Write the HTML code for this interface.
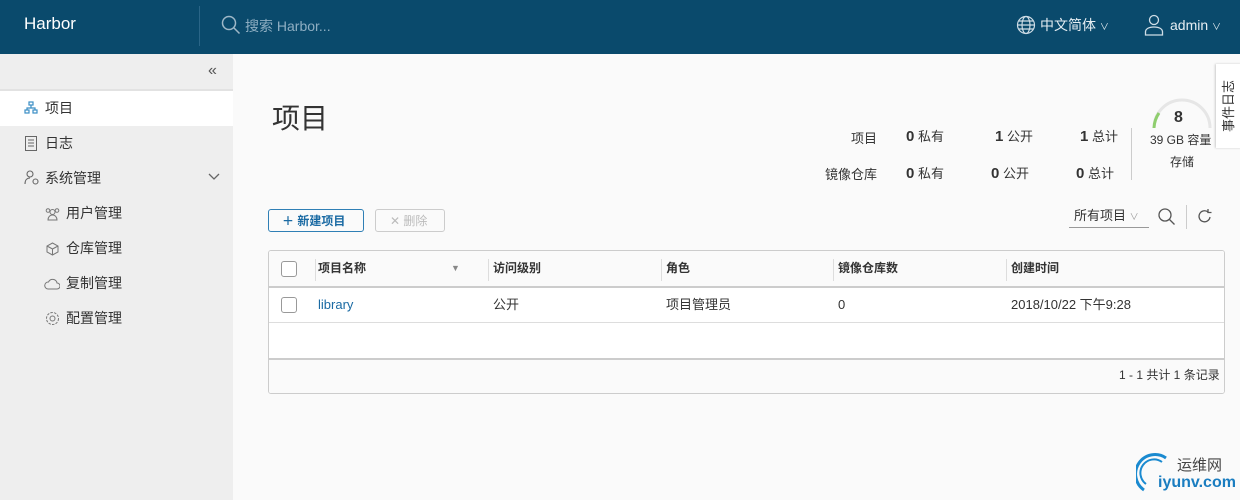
<!DOCTYPE html>
<html><head><meta charset="utf-8"><style>
*{margin:0;padding:0;box-sizing:border-box}
body{width:1240px;height:500px;overflow:hidden;font-family:"Liberation Sans","Noto Sans CJK SC",sans-serif;background:#fafafa;color:#333;position:relative;line-height:18px}
.hdr{position:absolute;left:0;top:0;width:1240px;height:54px;background:#0a4a6c;color:#fff}
.abs{position:absolute}
.side{position:absolute;left:0;top:54px;width:233px;height:446px;background:#eeeeee}
.nav{position:absolute;font-size:14px;color:#333}
.cb{position:absolute;width:16px;height:16px;border:1px solid #999;border-radius:3px;background:#fff}
.sep{position:absolute;width:1px;background:#ddd}
.t{position:absolute;font-size:13px;line-height:18px;height:18px}
</style></head><body>
<div class="hdr">
 <div class="abs" style="left:24px;top:15px;font-size:17px">Harbor</div>
 <div class="abs" style="left:199px;top:6px;width:1px;height:40px;background:#2a6587"></div>
 <svg class="abs" style="left:221px;top:15px" width="20" height="20" viewBox="0 0 20 20" fill="none" stroke="#9fb8c8" stroke-width="1.5"><circle cx="8" cy="8" r="6.5"/><path d="M13 13l5.5 5.5"/></svg>
 <div class="abs" style="left:245px;top:17px;font-size:14px;color:#8eaec2">搜索 Harbor...</div>
 <svg class="abs" style="left:1016px;top:15px" width="20" height="20" viewBox="0 0 20 20" fill="none" stroke="#cfdde6" stroke-width="1.2"><circle cx="10" cy="10" r="8.5"/><ellipse cx="10" cy="10" rx="4" ry="8.5"/><path d="M1.5 10h17M3 6h14M3 14h14"/></svg>
 <div class="abs" style="left:1040px;top:16px;font-size:14px;color:#e6eef3">中文简体 <span style="font-size:9px">∨</span></div>
 <svg class="abs" style="left:1144px;top:14px" width="20" height="22" viewBox="0 0 20 22" fill="none" stroke="#cfdde6" stroke-width="1.3"><circle cx="10" cy="6" r="4.5"/><path d="M1.5 21v-3c0-3 3-5 8.5-5s8.5 2 8.5 5v3z"/></svg>
 <div class="abs" style="left:1170px;top:16px;font-size:14px;color:#e6eef3">admin <span style="font-size:9px">∨</span></div>
</div>
<div class="side">
 <div class="abs" style="left:208px;top:8px;font-size:16px;color:#555">«</div>
 <div class="abs" style="left:0;top:35px;width:233px;height:2px;background:#e2e2e2"></div>
 <div class="abs" style="left:0;top:37px;width:233px;height:35px;background:#fff"></div>
 <svg class="abs" style="left:24px;top:47px" width="14" height="14" viewBox="0 0 14 14" fill="none" stroke="#3a8ec4" stroke-width="1.2"><rect x="5" y="1" width="4" height="3"/><rect x="1" y="9" width="4" height="3"/><rect x="9" y="9" width="4" height="3"/><path d="M7 4v3M3 9V7h8v2"/></svg>
 <div class="nav" style="left:45px;top:45px">项目</div>
 <svg class="abs" style="left:25px;top:82px" width="12" height="15" viewBox="0 0 12 15" fill="none" stroke="#666" stroke-width="1"><rect x=".5" y=".5" width="11" height="14"/><path d="M3 4h6M3 7h6M3 10h6"/></svg>
 <div class="nav" style="left:45px;top:80px">日志</div>
 <svg class="abs" style="left:24px;top:116px" width="16" height="16" viewBox="0 0 16 16" fill="none" stroke="#666" stroke-width="1.1"><circle cx="6" cy="4" r="3"/><path d="M1 14c0-4 2-6 5-6"/><circle cx="11.5" cy="11.5" r="2.5"/></svg>
 <div class="nav" style="left:45px;top:115px">系统管理</div>
 <svg class="abs" style="left:208px;top:119px" width="12" height="8" viewBox="0 0 12 8" fill="none" stroke="#666" stroke-width="1.3"><path d="M1 1l5 5 5-5"/></svg>
 <div class="nav" style="left:66px;top:150px">用户管理</div>
 <div class="nav" style="left:66px;top:185px">仓库管理</div>
 <div class="nav" style="left:66px;top:220px">复制管理</div>
 <div class="nav" style="left:66px;top:255px">配置管理</div>
 <svg class="abs" style="left:45px;top:153px" width="15" height="14" viewBox="0 0 15 14" fill="none" stroke="#777"><circle cx="7.5" cy="5" r="2.5"/><path d="M3 13c0-3 2-5 4.5-5s4.5 2 4.5 5z"/><circle cx="3" cy="3.5" r="1.8"/><circle cx="12" cy="3.5" r="1.8"/></svg>
 <svg class="abs" style="left:46px;top:188px" width="13" height="14" viewBox="0 0 13 14" fill="none" stroke="#777"><path d="M6.5 1l5.5 3v6l-5.5 3-5.5-3V4zM1 4l5.5 3 5.5-3M6.5 7v6"/></svg>
 <svg class="abs" style="left:44px;top:224px" width="16" height="12" viewBox="0 0 16 12" fill="none" stroke="#777"><path d="M4 11h9a3 3 0 0 0 0-6 4.5 4.5 0 0 0-8.5-1A3.5 3.5 0 0 0 4 11z"/></svg>
 <svg class="abs" style="left:45px;top:257px" width="15" height="15" viewBox="0 0 15 15" fill="none" stroke="#777"><circle cx="7.5" cy="7.5" r="2.5"/><circle cx="7.5" cy="7.5" r="6" stroke-dasharray="2.5 1.2"/></svg>
</div>
<div class="abs" style="left:272px;top:103px;font-size:28px;line-height:32px;color:#333">项目</div>
<div class="t" style="left:851px;top:130px">项目</div>
<div class="t" style="left:825px;top:166px">镜像仓库</div>
<div class="t" style="left:906px;top:128px"><b style="font-size:15px">0</b> 私有</div>
<div class="t" style="left:995px;top:128px"><b style="font-size:15px">1</b> 公开</div>
<div class="t" style="left:1080px;top:128px"><b style="font-size:15px">1</b> 总计</div>
<div class="t" style="left:906px;top:165px"><b style="font-size:15px">0</b> 私有</div>
<div class="t" style="left:991px;top:165px"><b style="font-size:15px">0</b> 公开</div>
<div class="t" style="left:1076px;top:165px"><b style="font-size:15px">0</b> 总计</div>
<div class="abs" style="left:1131px;top:128px;width:1px;height:52px;background:#ccc"></div>
<svg class="abs" style="left:1150px;top:96px" width="64" height="34" viewBox="0 0 64 34" fill="none" stroke-width="3"><path d="M4 32A28 28 0 0 1 60 32" stroke="#e6e6e6"/><path d="M4 32A28 28 0 0 1 9 17" stroke="#8fce6e"/></svg>
<div class="abs" style="left:1174px;top:109px;font-size:16px;font-weight:bold">8</div>
<div class="abs" style="left:1150px;top:131px;font-size:12px">39 GB 容量</div>
<div class="abs" style="left:1170px;top:153px;font-size:12px">存储</div>
<div class="abs" style="left:1216px;top:64px;width:26px;height:84px;background:#fff;box-shadow:-1px 0 2px #ccc"></div>
<div class="abs" style="left:1191px;top:96px;width:76px;height:20px;transform:rotate(-90deg);font-size:13px;text-align:center;line-height:20px">事件日志</div>
<div class="abs" style="left:268px;top:209px;width:96px;height:23px;border:1px solid #2f7fb5;border-radius:3px;color:#1a6aa3;font-size:12px;font-weight:bold;padding:2px 0 0 13px">＋ 新建项目</div>
<div class="abs" style="left:375px;top:209px;width:70px;height:23px;border:1px solid #ccc;border-radius:3px;color:#bbb;font-size:12px;padding:2px 0 0 14px">✕ 删除</div>
<div class="abs" style="left:1069px;top:206px;width:80px;height:22px;border-bottom:1px solid #999;font-size:13px;padding:1px 0 0 5px">所有项目 <span style="font-size:9px;color:#999">∨</span></div>
<svg class="abs" style="left:1157px;top:207px" width="20" height="20" viewBox="0 0 20 20" fill="none" stroke="#555" stroke-width="1.3"><circle cx="8" cy="8" r="6"/><path d="M12.5 12.5l5 5"/></svg>
<div class="abs" style="left:1186px;top:205px;width:1px;height:24px;background:#ccc"></div>
<svg class="abs" style="left:1197px;top:208px" width="16" height="16" viewBox="0 0 16 16" fill="none" stroke="#555" stroke-width="1.3"><path d="M13 9a5.5 5.5 0 1 1-2-5M11 1v3.5h3.5"/></svg>
<div class="abs" style="left:268px;top:250px;width:957px;height:144px;border:1px solid #ccc;border-radius:3px;background:#fff;overflow:hidden">
 <div class="abs" style="left:0;top:0;width:955px;height:37px;background:#fafafa;border-bottom:2px solid #ccc"></div>
 <div class="abs" style="left:0;top:71px;width:955px;height:1px;background:#ddd"></div>
 <div class="abs" style="left:0;top:107px;width:955px;height:35px;background:#fafafa;border-top:2px solid #ccc"></div>
 <div class="sep" style="left:46px;top:8px;height:22px"></div>
 <div class="sep" style="left:219px;top:8px;height:22px"></div>
 <div class="sep" style="left:392px;top:8px;height:22px"></div>
 <div class="sep" style="left:564px;top:8px;height:22px"></div>
 <div class="sep" style="left:737px;top:8px;height:22px"></div>
 <div class="cb" style="left:12px;top:10px"></div>
 <div class="cb" style="left:12px;top:46px"></div>
 <div class="t" style="left:49px;top:8px;font-size:12px;font-weight:bold">项目名称</div>
 <div class="abs" style="left:182px;top:12px;font-size:9px;color:#888;line-height:10px">▼</div>
 <div class="t" style="left:224px;top:8px;font-size:12px;font-weight:bold">访问级别</div>
 <div class="t" style="left:397px;top:8px;font-size:12px;font-weight:bold">角色</div>
 <div class="t" style="left:569px;top:8px;font-size:12px;font-weight:bold">镜像仓库数</div>
 <div class="t" style="left:742px;top:8px;font-size:12px;font-weight:bold">创建时间</div>
 <div class="t" style="left:49px;top:45px;color:#1a6aa3">library</div>
 <div class="t" style="left:224px;top:45px">公开</div>
 <div class="t" style="left:397px;top:45px">项目管理员</div>
 <div class="t" style="left:569px;top:45px">0</div>
 <div class="t" style="left:742px;top:45px">2018/10/22 下午9:28</div>
 <div class="t" style="left:850px;top:115px;font-size:12px">1 - 1 共计 1 条记录</div>
</div>
<svg class="abs" style="left:1136px;top:452px" width="40" height="44" viewBox="0 0 40 44" fill="none" stroke="#1a8ad0" stroke-width="3"><path d="M30 6A18 18 0 0 0 8 38"/><path d="M26 10A13 13 0 0 0 10 32" stroke-width="2"/></svg>
<div class="abs" style="left:1177px;top:457px;font-size:15px;color:#444">运维网</div>
<div class="abs" style="left:1158px;top:474px;font-size:16px;font-weight:bold;color:#1a7dc0">iyunv.com</div>
</body></html>
